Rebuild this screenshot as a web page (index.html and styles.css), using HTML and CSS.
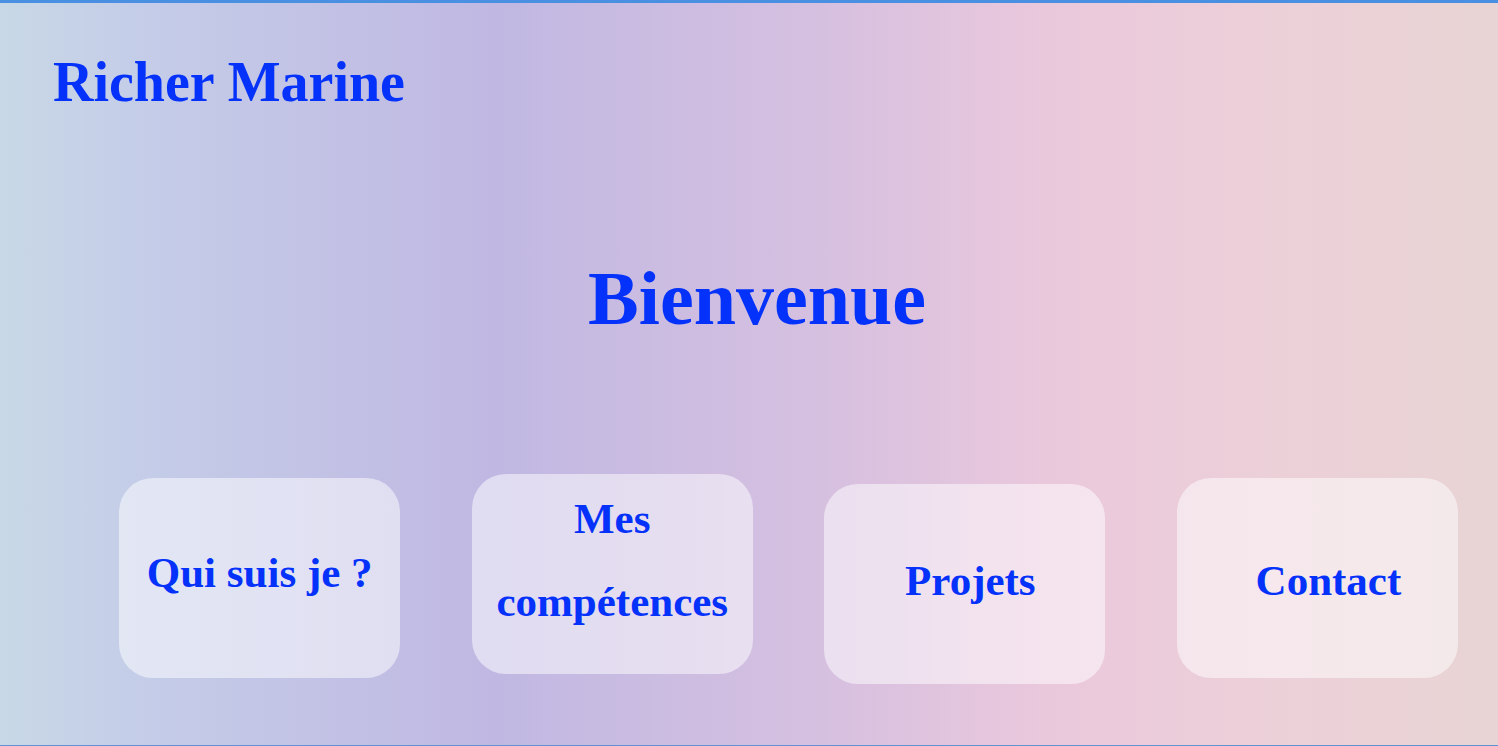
FILE: index.html
```html
<!DOCTYPE html>
<html lang="fr">
    <head>
        <meta charset="UTF-8">
        <meta name="viewport" content="width=device-width,initial-scale=1">
        <title>Richer Marine</title>
        <link rel="stylesheet" href="styles.css">
    </head>
    <body>
        <div class="page-container">
            <header class="site-header">
                <h1 class="site-title">Richer Marine</h1>
            </header>
            <main>
                <h2 class="welcome">Bienvenue</h2>
                <nav class="menu">
                    <a class="card card-about" href="#">Qui suis je ?</a>
                    <a class="card card-skills" href="#">Mes compétences</a>
                    <a class="card card-projects" href="#">Projets</a>
                    <a class="card card-contact" href="#">Contact</a>
                </nav>
            </main>
        </div>
    </body>
</html>
```

FILE: styles.css
```css
*, *::before, *::after {
    box-sizing: border-box;
    font-family: "Liberation Serif", "DejaVu Serif", serif;
}
html, body {
    margin: 0;
    padding: 0;
}
body {
    height: 746px;
    overflow: hidden;
    border-top: 3px solid rgb(74, 144, 226);
    border-bottom: 1px solid rgb(100, 145, 210);
    background: linear-gradient(90deg, rgb(200, 216, 230) 0%, rgb(196, 204, 232) 10%, rgb(192, 184, 226) 33%, rgb(214, 192, 224) 55%, rgb(234, 200, 220) 70%, rgb(236, 208, 216) 85%, rgb(232, 212, 212) 100%);
    color: rgb(5, 50, 250);
}
.page-container {
    width: 100%;
}
.site-header {
    padding: 49px 53px 0;
}
.site-title {
    margin: 0;
    font-size: 56px;
    line-height: 60px;
    font-weight: bold;
}
.welcome {
    margin: 141px 0 0;
    padding-left: 16px;
    text-align: center;
    font-size: 76px;
    line-height: 90px;
    font-weight: bold;
}
.menu {
    display: flex;
    align-items: flex-start;
    gap: 71.3px;
    padding: 131px 0 0 119px;
}
.card {
    display: flex;
    align-items: center;
    justify-content: center;
    flex: 0 0 281.3px;
    height: 200px;
    padding: 0 8px;
    border-radius: 34px;
    background-color: rgba(255, 255, 255, 0.5);
    text-align: center;
    font-size: 43px;
    font-weight: bold;
    line-height: 83px;
    color: rgb(5, 50, 250);
    text-decoration: none;
}
.card-about {
    margin-top: 4px;
    padding-bottom: 12px;
}
.card-skills {
    margin-top: 0;
    padding-bottom: 28px;
}
.card-projects {
    margin-top: 10px;
    padding-left: 19px;
    padding-bottom: 8px;
}
.card-contact {
    margin-top: 4px;
    padding-left: 30px;
    padding-top: 4px;
}
```
